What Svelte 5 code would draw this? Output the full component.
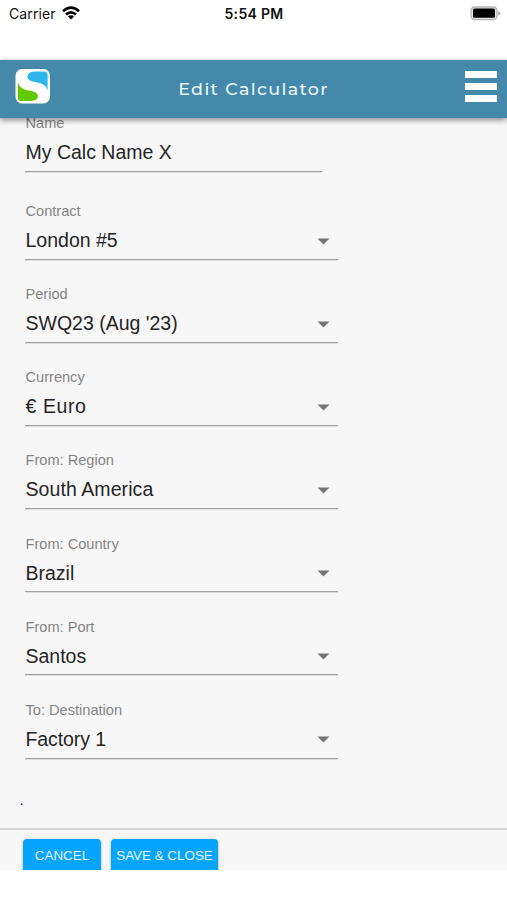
<script>
  const fields = [
    { label: 'Contract', value: 'London #5' },
    { label: 'Period', value: "SWQ23 (Aug '23)" },
    { label: 'Currency', value: '€ Euro', spacing: 0.6 },
    { label: 'From: Region', value: 'South America', spacing: 0.08 },
    { label: 'From: Country', value: 'Brazil' },
    { label: 'From: Port', value: 'Santos' },
    { label: 'To: Destination', value: 'Factory 1', spacing: -0.1 }
  ];
</script>

<div class="screen">
  <div class="status">
    <div class="carrier">
      <span>Carrier</span>
      <svg width="18" height="14" viewBox="0 0 18 14" fill="none" stroke="#000" stroke-width="2.7">
        <path d="M1 5.2Q9-1.8 17 5.2" />
        <path d="M4 8.5Q9 4.2 14 8.5" />
        <path d="M9 13.6 5.9 10.6Q9 8 12.1 10.6Z" fill="#000" stroke="none" />
      </svg>
    </div>
    <span class="time">5:54 PM</span>
    <svg class="battery" width="31" height="15" viewBox="0 0 31 15">
      <rect x="1" y="1" width="26" height="12.6" rx="3.6" fill="#e4e4e4" stroke="#b5b5b5" stroke-width="1.3" />
      <rect x="3" y="2.6" width="22" height="9.2" rx="1.5" fill="#000" />
      <path d="M28.2 5.2Q30.5 6.2 30.5 7.3T28.2 9.4Z" fill="#aaa" />
    </svg>
  </div>

  <header>
    <svg class="logo" width="35" height="35" viewBox="0 0 35 35">
      <rect x=".5" y="0" width="34.5" height="34.5" rx="6.5" fill="#fff" />
      <path d="M32.6 21.5V6Q32.6 2.5 29.1 2.5H20C14.8 2.5 12.2 5.3 12.5 8.2C13 12 18.5 12.6 23.8 13.8C28.8 15 31.6 17.5 32.6 21.5Z" fill="#2db5ea" />
      <path d="M2.9 12.8V28.4Q2.9 31.9 6.4 31.9H15.8C21 31.9 23.1 29.5 22.9 26.8C22.5 22.9 17 22.1 11.5 21C6.8 20 3.8 17 2.9 12.8Z" fill="#62c900" />
    </svg>
    <h1>Edit Calculator</h1>
    <div class="menu"><i></i><i></i><i></i></div>
  </header>

  <main>
    <div class="field name">
      <span class="label">Name</span>
      <span class="value">My Calc Name X</span>
    </div>
    {#each fields as field}
      <div class="field">
        <span class="label">{field.label}</span>
        <div class="row">
          <span class="value" style="letter-spacing: {field.spacing ?? 0}px">{field.value}</span>
          <svg width="13" height="7" viewBox="0 0 13 7"><path d="M.5.5h12l-6 6z" fill="#757575" /></svg>
        </div>
      </div>
    {/each}
    <div class="dot">.</div>
  </main>

  <footer>
    <button class="cancel">CANCEL</button>
    <button class="save">SAVE &amp; CLOSE</button>
  </footer>
</div>

<style>
  :global(body) { margin: 0; background: #fff; }
  .screen {
    width: 507px; height: 900px; overflow: hidden;
    display: flex; flex-direction: column;
    background: #fff; color: #252525;
    font-family: "Liberation Sans", Arial, sans-serif;
  }
  .status {
    height: 59.5px; flex: none; box-sizing: border-box; padding: 6px 6px 0 9px;
    display: grid; grid-template-columns: 1fr auto 1fr; align-items: start;
    font: 14px/16px Inter, sans-serif; color: #111;
  }
  .carrier { display: flex; gap: 6px; letter-spacing: .1px; }
  .time { font-weight: 600; letter-spacing: .3px; margin-left: -2px; }
  .battery { justify-self: end; }
  header {
    position: relative; z-index: 1; height: 58.5px; flex: none; box-sizing: border-box;
    padding: 0 10px 5px 15px; display: grid;
    grid-template-columns: 1fr auto 1fr; align-items: center;
    background: #4488aa; box-shadow: 0 2px 6px rgba(0, 0, 0, .45);
  }
  h1 {
    margin: 5px 5px 0 0; color: #e9f7fd;
    font: 500 17.5px/24px Montserrat, Inter, sans-serif; letter-spacing: 1.35px;
  }
  .menu { justify-self: end; display: flex; flex-direction: column; gap: 5px; width: 32px; margin-top: 1px; }
  .menu i { height: 7px; background: #fff; }
  main {
    height: 710px; flex: none; box-sizing: border-box; background: #f7f7f7;
    padding-left: 25px;
  }
  .field {
    width: 312.5px; height: 83.08px; box-sizing: border-box;
    display: flex; flex-direction: column; padding-top: 25.2px;
    border-bottom: 1px solid #a0a0a0; box-shadow: 0 1px #dedede;
  }
  .field.name { width: 297px; height: 54px; padding-top: 0; margin-bottom: 5px; }
  .name .label { margin-top: -4px; }
  .label { padding-left: .5px; font-size: 14.6px; line-height: 18px; color: #858585; white-space: nowrap; }
  .value { padding-left: .5px; margin-top: 7px; font-size: 19.5px; line-height: 26px; white-space: nowrap; }
  .row { display: flex; align-items: center; justify-content: space-between; }
  .row svg { margin: 9px 8px 0 0; }
  .dot { margin: 31.5px 0 0 -5.5px; font-size: 15px; line-height: 20px; color: #17175c; }
  footer {
    height: 42px; flex: none; box-sizing: border-box; overflow: hidden;
    display: flex; gap: 10px; padding: 9px 0 0 23px;
    background: #f7f7f7; border-top: 2px solid #d8d8d8;
  }
  button {
    height: 36px; padding: 0; border: 0; border-radius: 4px; background: #05a5ff;
    color: #e8f7ff; font: 13.4px/33px "Liberation Sans", Arial, sans-serif;
    display: flex; justify-content: center; white-space: nowrap;
    box-shadow: 0 1px 3px rgba(0, 0, 0, .3);
  }
  .cancel { width: 78px; }
  .save { width: 107px; }
</style>
